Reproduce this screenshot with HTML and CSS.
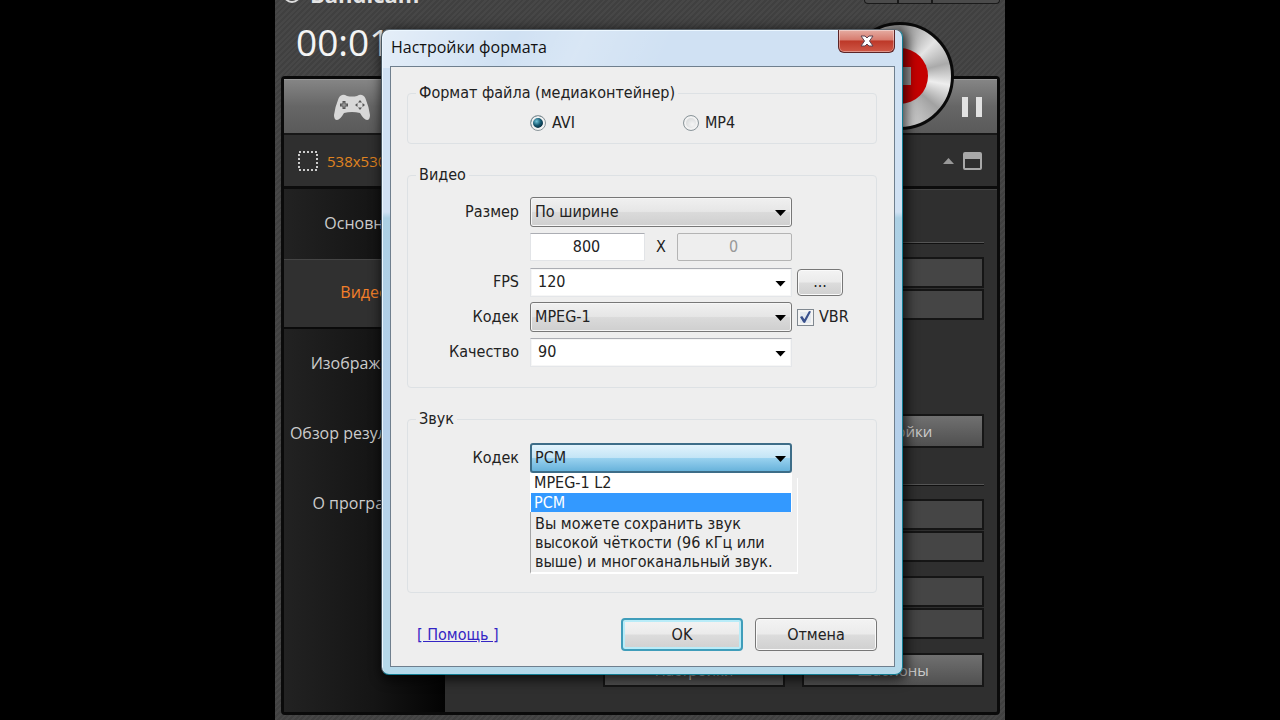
FILE: index.html
```html
<!DOCTYPE html>
<html lang="ru">
<head>
<meta charset="utf-8">
<title>Настройки формата</title>
<link rel="stylesheet" href="styles.css">
</head>
<body>
<div class="app">
  <header class="app-header">
    <div class="brand-row">
      <svg class="brand-icon" viewBox="0 0 20 20"><circle cx="10" cy="10" r="8" fill="none" stroke="#ddd" stroke-width="2"/></svg>
      <span class="brand">Bandicam</span>
      <div class="window-tabs"><i></i><i></i><i></i></div>
    </div>
    <div class="timer">00:01</div>
  </header>

  <div class="panel">
    <div class="toolbar">
      <button class="mode-button" aria-label="Игровой режим">
        <svg viewBox="0 0 36 26" width="36" height="26">
          <path d="M8 1 Q10 0 13 2 Q18 3 23 2 Q26 0 28 1 Q31 2 32 6 Q35 13 36 21 Q36 26 33 26 Q30 26 26 19 Q18 17 10 19 Q6 26 3 26 Q0 26 0 21 Q1 13 4 6 Q5 2 8 1Z" fill="#d8d8d8"/>
          <path d="M8.500 7h3v2.500H14v3h-2.500V15h-3v-2.500H6v-3h2.500z" fill="#555"/>
          <path d="M9.500 8.500h1v2h2v1h-2v2h-1v-2h-2v-1h2z" fill="#aaa"/>
          <g fill="#555"><path d="M26 6l2 2.500h-4zM26 16l2-2.500h-4zM21 11l2.500-2v4zM31 11l-2.500-2v4z"/></g>
        </svg>
      </button>
      <button class="pause-button" aria-label="Пауза"><i></i><i></i></button>
    </div>
    <div class="info-row">
      <svg width="20" height="20" viewBox="0 0 20 20"><rect x="1" y="1" width="18" height="18" fill="none" stroke="#ccc" stroke-width="2" stroke-dasharray="2 2"/></svg>
      <span class="region-size">538x530</span>
      <svg class="window-icon" width="39" height="20" viewBox="0 0 39 20"><path d="M0 13 L5.500 7 L11 13Z" fill="#999"/><path d="M22 1h15q2 0 2 2v14q0 2-2 2H22q-2 0-2-2V3q0-2 2-2zM22 8v9h15V8z" fill="#a8a8a8" fill-rule="evenodd"/></svg>
    </div>
    <div class="app-body">
      <nav class="sidebar">
        <a href="#">Основные</a>
        <a href="#" class="active">Видео</a>
        <a href="#">Изображения</a>
        <a href="#">Обзор результатов</a>
        <a href="#">О программе</a>
      </nav>
      <main class="content">
        <hr>
        <div class="cells"><div></div><div></div></div>
        <div class="button-row upper"><button>Настройки</button></div>
        <hr>
        <div class="cells"><div></div><div></div></div>
        <div class="cells"><div></div><div></div></div>
        <div class="button-row"><button>Настройки</button><button>Шаблоны</button></div>
      </main>
    </div>
  </div>

  <button class="record" aria-label="Остановить запись"><span><i></i></span></button>

  <section class="dialog" role="dialog" aria-labelledby="dialog-title">
    <header class="titlebar">
      <h1 id="dialog-title">Настройки формата</h1>
      <button class="close" aria-label="Закрыть">
        <svg width="14" height="12" viewBox="0 0 14 12"><path d="M1 1h4l2 2 2-2h4L9.500 6 13 11H9L7 9l-2 2H1l3.500-5z" fill="#fff" stroke="#5d4350" stroke-width="1"/></svg>
      </button>
    </header>
    <form class="client">
      <fieldset class="container-format">
        <legend>Формат файла (медиаконтейнер)</legend>
        <div class="radios">
          <label><input type="radio" name="container" checked>AVI</label>
          <label><input type="radio" name="container">MP4</label>
        </div>
      </fieldset>

      <fieldset class="video">
        <legend>Видео</legend>
        <div class="row">
          <label for="size">Размер</label>
          <div class="combo"><select id="size"><option>По ширине</option></select></div>
        </div>
        <div class="row">
          <div class="dimensions">
            <input type="text" value="800" aria-label="Ширина"><span>X</span><input type="text" value="0" aria-label="Высота" disabled>
          </div>
        </div>
        <div class="row">
          <label for="fps">FPS</label>
          <div class="combo editable"><select id="fps"><option>120</option></select></div>
          <button type="button" class="button more">...</button>
        </div>
        <div class="row">
          <label for="vcodec">Кодек</label>
          <div class="combo"><select id="vcodec"><option>MPEG-1</option></select></div>
          <label class="check"><input type="checkbox" checked>VBR</label>
        </div>
        <div class="row">
          <label for="quality">Качество</label>
          <div class="combo editable"><select id="quality"><option>90</option></select></div>
        </div>
      </fieldset>

      <fieldset class="audio">
        <legend>Звук</legend>
        <div class="row">
          <label for="acodec">Кодек</label>
          <div class="combo open">
            <select id="acodec"><option>PCM</option><option>MPEG-1 L2</option></select>
            <ul class="options" role="listbox" aria-label="Кодек">
              <li role="option">MPEG-1 L2</li>
              <li role="option" aria-selected="true">PCM</li>
            </ul>
          </div>
        </div>
        <p class="note">Вы можете сохранить звук высокой чёткости (96 кГц или выше) и многоканальный звук.</p>
      </fieldset>

      <footer class="actions">
        <a href="#">[ Помощь ]</a>
        <button type="button" class="button default">OK</button>
        <button type="button" class="button">Отмена</button>
      </footer>
    </form>
  </section>
</div>
</body>
</html>
```

FILE: styles.css
```css
* { box-sizing: border-box; }

body {
  margin: 0;
  background: #000;
  font: 16px/20px "DejaVu Sans Condensed", "DejaVu Sans", sans-serif;
  color: #222;
}

button, input, select { font: inherit; color: inherit; }

.app {
  position: relative;
  display: flex;
  flex-direction: column;
  max-width: 730px;
  min-height: 100vh;
  margin: 0 auto;
  padding: 0 5px 5px 6px;
  overflow: hidden;
  background: repeating-linear-gradient(135deg, #474747 0 2px, #404040 2px 4px);
  font-family: "Open Sans", "Noto Sans", sans-serif;
}

.app-header { height: 76px; }

.brand-row {
  display: flex;
  align-items: flex-end;
  height: 4px;
  padding-left: 1px;
}
.brand-icon { width: 20px; height: 20px; }
.brand {
  margin-left: 8px;
  font-size: 22px;
  line-height: 20px;
  font-weight: 700;
  color: #e4e4e4;
}
.window-tabs { display: flex; margin-left: auto; }
.window-tabs i {
  width: 34px;
  height: 12px;
  border: 1px solid #1a1a1a;
  border-top: 0;
  background: #4b4b4b;
}
.window-tabs i:first-child { border-radius: 0 0 0 4px; }
.window-tabs i:last-child { width: 68px; border-radius: 0 0 4px 0; }

.timer {
  padding: 14px 0 0 15px;
  font-size: 37px;
  line-height: 48px;
  color: #f4f4f4;
}

.panel {
  flex: 1;
  display: flex;
  flex-direction: column;
  border: 3px solid #0a0a0a;
  border-radius: 4px;
  background: #2f2f2f;
}

.toolbar {
  display: flex;
  justify-content: space-between;
  align-items: center;
  height: 54px;
  padding: 0 15px 0 50px;
  background: linear-gradient(#858585, #666 50%, #5a5a5a);
  border-top: 1px solid #999;
}
.mode-button, .pause-button { display: flex; gap: 8px; padding: 0; border: 0; background: none; }
.pause-button i { width: 6px; height: 20px; background: #e2e2e2; }

.info-row {
  display: flex;
  align-items: center;
  gap: 9px;
  height: 56px;
  padding: 0 15px 0 14px;
  border-top: 2px solid #171717;
  border-bottom: 3px solid #0c0c0c;
}
.region-size { color: #e08420; font-size: 15px; }
.window-icon { margin-left: auto; }

.app-body { flex: 1; display: grid; grid-template-columns: 161px 1fr; }

.sidebar { background: linear-gradient(90deg, #222, #151515 55%, #030303); }
.sidebar a {
  display: flex;
  align-items: center;
  justify-content: center;
  height: 70px;
  padding-bottom: 3px;
  white-space: nowrap;
  color: #ccc;
  text-decoration: none;
}
.sidebar .active {
  background: #303030;
  border-top: 1px solid #454545;
  border-bottom: 2px solid #0a0a0a;
  color: #f5802a;
}

.content {
  padding: 52px 13px 20px 158px;
  border-top: 1px solid #444;
}
.content hr { height: 2px; margin: 0 0 13px; border: 0; background: #101010; border-top: 1px solid #555; }
.cells { display: grid; gap: 1px; margin-bottom: 14px; }
.cells div { height: 31px; border: 2px solid #151515; background: #454545; }
.button-row { display: grid; grid-template-columns: 1fr 1fr; gap: 17px; }
.button-row button {
  height: 34px;
  padding: 0;
  border: 2px solid #161616;
  background: linear-gradient(#707070, #505050);
  color: #ccc;
  font-size: 15px;
}
.button-row.upper { margin: 94px 0 36px; }
.button-row.upper button { grid-column: 2; }

.record {
  position: absolute;
  top: 22px;
  right: 51px;
  display: grid;
  place-items: center;
  width: 108px;
  height: 108px;
  padding: 0;
  border: 3px solid #0a0a0a;
  border-radius: 50%;
  background: conic-gradient(#888, #e4e4e4 45deg, #aaa 75deg, #eee 100deg, #a2a2a2 130deg, #ddd 180deg, #888 250deg, #eee 300deg, #888);
}
.record span { display: grid; place-items: center; width: 56px; height: 56px; border-radius: 50%; background: #c50000; }
.record i { width: 22px; height: 18px; background: #999; }

.dialog {
  position: absolute;
  top: 29px;
  left: 106px;
  width: 522px;
  padding: 0 7px 7px 8px;
  border: 1px solid #36555f;
  border-color: #5a646c #127d93 #127d93 #4a5862;
  border-radius: 8px;
  background:
    linear-gradient(115deg, #ffffff70, #ffffff00 25%, #ffffff30 38%, #ffffff00 55%) top / 100% 38px no-repeat,
    linear-gradient(#d0e1f3 0 182px, #acd0e4 188px, #b5cfea 60%, #b5d9ea);
  box-shadow: inset 1px 1px 0 #ecf7ff, 2px 3px 12px 2px #000000b0;
  font-family: "DejaVu Sans Condensed", "DejaVu Sans", sans-serif;
}

.titlebar { display: flex; justify-content: space-between; height: 36px; padding-left: 1px; }
.titlebar h1 {
  margin: 0;
  font: 16px/34px "Open Sans", "Noto Sans", sans-serif;
  color: #111;
}
.close {
  display: grid;
  place-items: center;
  width: 57px;
  height: 23px;
  padding: 0;
  border: 1px solid #5b2426;
  border-top: 0;
  border-radius: 0 0 6px 6px;
  background: linear-gradient(#e5aca2, #d77b6e 45%, #bd3828 50%, #cf5847);
  box-shadow: inset 0 0 0 1px #ffffff60;
}

.client {
  display: flex;
  flex-direction: column;
  gap: 21px;
  padding: 16px 17px 15px 16px;
  border: 1px solid #6f7f8e;
  background: #eee;
}

fieldset {
  min-width: 0;
  margin: 0;
  padding: 12px 0 20px;
  border: 1px solid #dde1e4;
  border-radius: 4px;
}
legend { margin-left: 8px; padding: 0 3px; }
.container-format { padding: 10px 0; }

.radios { display: flex; gap: 104px; padding-left: 122px; }
.radios label, .check { display: flex; align-items: center; gap: 6px; }
.check { gap: 5px; }

.radios input {
  appearance: none;
  width: 16px;
  height: 16px;
  margin: 0;
  border: 1px solid #8b969b;
  border-radius: 50%;
  background: radial-gradient(circle at 60% 60%, #f5f5f5, #c5c9cb);
  box-shadow: inset 0 0 0 2px #f2f2f2;
}
.radios label + label { padding-left: 4px; }
.radios input:checked { background: radial-gradient(circle at 40% 38%, #72c5da, #14566e 35%, #0c3447 55%, #f2f6f8 65%); }

.row {
  display: grid;
  grid-template-columns: 111px 262px auto;
  justify-content: start;
  align-items: center;
  column-gap: 11px;
  height: 30px;
  margin-bottom: 5px;
}
.row > label:first-child { text-align: right; }
.row > :nth-child(3) { margin-left: -6px; }

.combo { position: relative; }
.combo::after {
  content: "";
  position: absolute;
  right: 6px;
  top: 13px;
  width: 11px;
  height: 6px;
  background: #000;
  clip-path: polygon(0 0, 100% 0, 50% 100%);
  pointer-events: none;
}
.combo select {
  appearance: none;
  display: block;
  width: 100%;
  height: 30px;
  padding: 0 24px 0 4px;
  border: 1px solid #777;
  border-radius: 3px;
  background: linear-gradient(#f0f0f0, #e6e6e6 48%, #dadada 52%, #cfcfcf);
  box-shadow: inset 0 0 0 1px #f6f6f6;
}
.combo.editable select {
  padding-left: 7px;
  padding-bottom: 1px;
  height: 29px;
  border: 1px solid #e4e6e9;
  border-top-color: #abadb3;
  border-radius: 0;
  background: #fff;
}
.combo.open select {
  border: 2px solid #3d6d88;
  padding-left: 3px;
  background: linear-gradient(#e2f3fc, #c4e5f6 48%, #98d1ef 52%, #68b3db);
  box-shadow: none;
}

.options {
  position: absolute;
  top: 30px;
  left: 0;
  right: 0;
  margin: 0;
  padding: 0 1px;
  list-style: none;
  background: #fff;
  line-height: 20px;
}
.options li { padding-left: 3px; }
.options [aria-selected="true"] { height: 19px; background: #3399ff; color: #fff; }

.dimensions {
  grid-column: 2;
  display: grid;
  grid-template-columns: 1fr 32px 1fr;
  text-align: center;
}
.dimensions input {
  width: 100%;
  height: 28px;
  padding: 0 2px 1px 0;
  border: 1px solid #e2e4e7;
  border-top-color: #abadb3;
  background: #fff;
  text-align: center;
}
.dimensions span { line-height: 28px; }
.dimensions input:disabled { border: 1px solid #b4b4b4; border-radius: 2px; background: #eee; color: #999; }

.check input {
  appearance: none;
  width: 17px;
  height: 17px;
  margin: 0;
  border: 1px solid #808890;
  background: #e4e9ef;
  box-shadow: inset 0 0 0 2px #f4f4f4;
  display: grid;
  place-items: center;
}
.check input::before {
  content: "";
  width: 11px;
  height: 12px;
  background: #39508c;
  clip-path: polygon(0 50%, 20% 42%, 40% 68%, 82% 0, 100% 5%, 45% 100%, 30% 95%);
}

.button {
  width: 122px;
  height: 33px;
  padding: 0;
  border: 1px solid #777;
  border-radius: 4px;
  background: linear-gradient(#f3f3f3, #ebebeb 48%, #dcdcdc 52%, #d0d0d0);
  box-shadow: inset 0 0 0 1px #fafafa;
}
.button.more { width: 46px; height: 27px; }
.button.default { border: 2px solid #3f9dba; box-shadow: inset 0 0 0 2px #b9ecf8; }

.video .row:last-child { margin-bottom: 0; }
.audio { padding: 14px 0 18px; }
.audio .row { margin-bottom: 0; }
.note {
  width: 268px;
  margin: 5px 0 0 122px;
  padding: 36px 0 1px 4px;
  border: 1px solid #a5a5a5;
  border-width: 0 1px 2px;
  border-right-color: #fff;
  border-bottom-color: #fff;
  line-height: 19px;
}

.actions { display: flex; align-items: center; gap: 12px; margin-top: 4px; padding-left: 10px; }
.actions a { margin-right: auto; color: #3425c4; }
```
